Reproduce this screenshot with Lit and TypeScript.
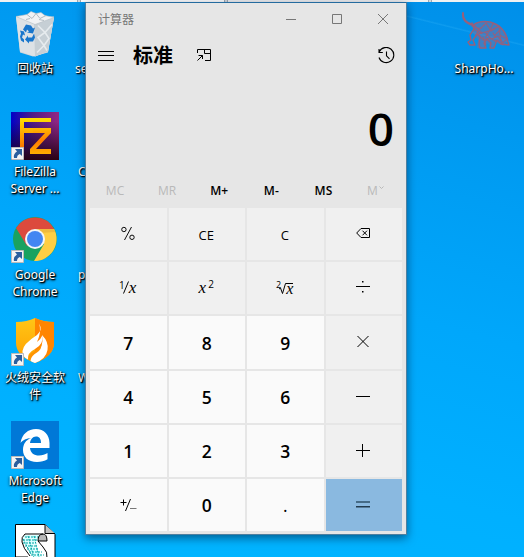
import { LitElement, html, css, svg, nothing } from "lit";
import { customElement, property } from "lit/decorators.js";

const recycle = svg`
  <path d="M0 5 38 5 32 41 17 45 4 41z" fill="#cfd6da"/>
  <path d="M0 5 18 11l20-5-6 34-13 5-15-5z" fill="#dde2e6"/>
  <path d="M18 11l20-5-6 34-13 5z" fill="#c6cfd5"/>
  <path d="M0 5 11 3l4-3 5 2 5-1 4 3 9 2-19 7z" fill="#f0f2f4" stroke="#b4bec4" stroke-width=".6"/>
  <path d="M11 3l5 4 4-5 4 5 6-3M14 7l-4 1M23 8l5 1" fill="none" stroke="#a9b4bb" stroke-width=".9"/>
  <path d="M22 14l7 7-7 5 6 8-7 7M36 13l-7 8 4 6-5 7 3 5" fill="none" stroke="#e6ebee" stroke-width="1.600"/>
  <g fill="#1876cc">
    <path d="M7 18l3-5 5 1 2 3 2-1-2 6-6-1 2-1-2-2-1 3z"/>
    <path d="M4 19l4 1 1 4-2-1-1 3 2 2v3l-3-2-1-4 1-3z"/>
    <path d="M12 26h4l2-4 1 4-2 4h-4v2l-4-4 3-4z"/>
  </g>`;

const filezilla = svg`
  <defs>
    <linearGradient id="fzb" x1="0" y1="0" x2="1" y2="0"><stop offset="0" stop-color="#0000c8"/><stop offset=".45" stop-color="#501d87"/><stop offset="1" stop-color="#942782"/></linearGradient>
    <linearGradient id="fzd" x1="0" y1="0" x2="0" y2="1"><stop offset=".2" stop-color="#150018" stop-opacity="0"/><stop offset="1" stop-color="#25000c" stop-opacity=".94"/></linearGradient>
    <linearGradient id="fzf" x1="0" y1="0" x2="0" y2="1"><stop offset="0" stop-color="#ffe000"/><stop offset=".55" stop-color="#ff9c00"/><stop offset="1" stop-color="#ef6200"/></linearGradient>
    <linearGradient id="fzz" x1="0" y1="0" x2="0" y2="1"><stop offset="0" stop-color="#ffb900"/><stop offset=".5" stop-color="#ff7b00"/><stop offset="1" stop-color="#ffaf00"/></linearGradient>
  </defs>
  <path d="M0 0h48v48H0z" fill="url(#fzb)"/><path d="M0 0h48v48H0z" fill="url(#fzd)"/>
  <path d="M9 6h31v4H13v6h11v5H13v19H9z" fill="url(#fzf)"/>
  <path d="M22 16h18v5L25 37h15v5H19v-5l15-16H22z" fill="url(#fzz)"/>`;

const chrome = svg`
  <circle cx="24" cy="22" r="22" fill="#1aa260"/>
  <path d="M24 22 5 11A22 22 0 0 1 43.200 12H24z" fill="#dc4a3d"/>
  <path d="M5 11l11 18 8-7-3-9z" fill="#dc4a3d"/>
  <path d="M24 12h19.200A22 22 0 0 1 23 44l10-17z" fill="#ffce44"/>
  <path d="M24 12h19.200l1 3-15 1z" fill="#d9a13a" opacity=".45"/>
  <circle cx="24" cy="22" r="10" fill="#f4f6f8"/><circle cx="24" cy="22" r="8" fill="#4386f2"/>`;

const huorong = svg`
  <defs><linearGradient id="hr" x1="0" y1="0" x2="0" y2="1"><stop offset="0" stop-color="#ffc617"/><stop offset="1" stop-color="#ffa000"/></linearGradient></defs>
  <path d="M24 0Q32 4 43 4v21q0 13-19 20Q5 38 5 25V4Q16 4 24 0z" fill="url(#hr)"/>
  <path d="M24 0Q32 4 43 4v21q0 13-19 20z" fill="#ff8500"/>
  <path d="M28 5.500Q32 12 26 17 12 26 11.500 33 11 39 17 41.500 16 35 24 31 33 26 31 18 30 21 26 24 31 13 28 5.500z" fill="#fff"/>
  <path d="M31 17Q38 24 36.500 32 35 41 24 45q-4-1-5-3 1-6 7-9 7-4 5-16z" fill="#fff"/>
  <path d="M17.200 41.500Q17 37 23 33.500 29 30.500 30.500 26 31 31 26 34.500 20 38 19.500 42.500z" fill="#ff9400"/>`;

const edge = svg`
  <path d="M0 0h48v48H0z" fill="#0078d7"/>
  <path d="M9.500 22C11 13 17 8 25 8c8 0 13.500 6 13.500 14v5H19c.5 5 4 7.500 9 7.500 3.500 0 6-1 8.500-2.500v6.200C33.500 40 30 41 26 41 17 41 12 36 12 29c0-6 3-10 8-12-6 .5-9 3-10.500 5zM19 22h11c0-4-1.500-6.500-5-6.500S19.500 18.500 19 22z" fill="#fff"/>`;

const script = svg`
  <path d="M4.500.5H34l10 10V48H4.500z" fill="#fff" stroke="#000"/>
  <path d="M34 .5v9h10" fill="#c0c0c0" stroke="#000"/>
  <path d="M13 11h20l-5 4q-8 4-1 12l4 5v16H11v-9h10q5-4-2-11-9-11-6-17z" fill="#dff"/>
  <path d="M14 13h15M12 16h15M12 19h12M14 22h11M16 25h12M18 28h13M20 31h13M17 12l6 22M23 12l5 21M12 15l8 15" stroke="#00a6a6" stroke-dasharray="2 1"/>
  <path d="M32 10q4 0 4 7h-9q0-7 5-7z" fill="#b8b8b8" stroke="#000"/>
  <path d="M32 10H14q-4 3-3 8 1 6 8 14M27 17l5 6q5 5 4 11M5 33h12" fill="none" stroke="#000"/>`;

const hound = svg`
  <path d="M11 13Q25 5 37 14q9 6 9 15l-5 5-8-4-2 6-6-5-4 5h-6l1-8-5-7z" fill="#7c6c9c" opacity=".5"/>
  <g fill="none" stroke="#96607c" stroke-linecap="round" stroke-linejoin="round">
    <path d="M1 1q-1 9 10 12" stroke-width="2"/>
    <path d="M11 13q7-5 17-3 15 4 18 20l1 3-8-1-4-4-3 8h-4l1-5-4-4-3 4 2 5h-6l-1-4 1-7-3-3-4 6 2 5H8l-2-3 3-2-1-5 4-6-2-6z" stroke-width="1.400"/>
    <path d="M10 14l8 3 6-6 5 8 8-5 1 9 7 4-5 4-4-7-7 3-6-7-7 2 5 6 7-2 7 4M17 16l-3 8M28 18l-5 8M31 21l3 5M12 17l8 5M12 13l8 8M24 20l12-5M31 12l-3 6M38 18l-5 5M21 25l3 8M38 24l2 7" stroke-width="1.200" stroke-dasharray="2 1.200"/>
  </g>`;

@customElement("desk-icon")
class DeskIcon extends LitElement {
  @property({ attribute: false }) art: unknown = nothing;
  @property() label = "";
  @property({ type: Boolean }) shortcut = false;

  static styles = css`
    :host { display: flex; flex-direction: column; align-items: center; width: 70px; height: 103px; }
    .art { position: relative; width: 48px; height: 48px; flex: none; }
    .art svg { display: block; overflow: visible; }
    .art .link { position: absolute; left: 0; bottom: 0; }
    .label {
      margin-top: 3px; white-space: pre; text-align: center; color: #fff;
      font: 12px/17px "Noto Sans", "Noto Sans CJK SC", sans-serif;
      text-shadow: 1px 1px 1px #000, 1px 1px 2px #000, 0 1px 3px rgba(0,0,0,.8);
    }
  `;

  render() {
    return html`
      <div class="art">
        <svg width="48" height="48" viewBox="0 0 48 48">${this.art}</svg>
        ${this.shortcut
          ? html`<svg class="link" width="13" height="13" viewBox="0 0 13 13">
              <path d="M.5.5h12v12H.5z" fill="#f4f4f4" stroke="#bbb" />
              <path d="M4 2h7v7L8.800 7Q6 8 6 11H3Q2 7 6 4.500z" fill="#2b5f9e" />
            </svg>`
          : nothing}
      </div>
      <div class="label">${this.label}</div>
    `;
  }
}

const line = (d: string, w = 20, h = 20) =>
  html`<svg width=${w} height=${h} viewBox="0 0 ${w} ${h}" fill="none" stroke="currentColor"><path d=${d} /></svg>`;

const keys: { c: string; v: unknown }[] = [
  { c: "fn", v: html`<svg width="14" height="16" viewBox="0 0 14 16" fill="none" stroke="currentColor" stroke-width=".95"><circle cx="2.900" cy="4.500" r="2.200"/><circle cx="11" cy="12.300" r="2.200"/><path d="M10.500 2 3.500 15"/></svg>` },
  { c: "fn", v: html`<span class="word">CE</span>` },
  { c: "fn", v: html`<span class="word">C</span>` },
  { c: "fn", v: html`<svg width="14" height="12" viewBox="0 0 14 12" fill="none" stroke="currentColor"><path d="M5 1.500h8.500v9H5L.7 6z"/><path d="M6.500 3.700l4.500 4.600M11 3.700L6.500 8.300"/></svg>` },
  { c: "fn", v: html`<span class="math"><span class="one">1</span><svg class="bar" width="6" height="13" viewBox="0 0 6 13"><path d="M5.500 .5.500 12.500" stroke="currentColor"/></svg><i>x</i></span>` },
  { c: "fn", v: html`<span class="math"><i>x</i><span class="sq">2</span></span>` },
  { c: "fn", v: html`<span class="math"><span class="deg">2</span><svg class="root" width="15" height="15" viewBox="0 0 15 15" fill="none" stroke="currentColor"><path d="M1 8l1.500-1L4.500 12.500 7.500 2.500H15"/></svg><i class="rad">x</i></span>` },
  { c: "fn", v: html`<svg width="14" height="14" viewBox="0 0 14 14"><path d="M0 6h14v1H0zM6 1h1.500v1.500H6zM6 11h1.500v1.500H6z" fill="currentColor"/></svg>` },
  ...["7", "8", "9"].map((v) => ({ c: "num first", v })),
  { c: "fn", v: html`<svg width="14" height="14" viewBox="0 0 14 14"><path d="M1.500 2l11 11M12.500 2l-11 11" stroke="currentColor"/></svg>` },
  ...["4", "5", "6"].map((v) => ({ c: "num", v })),
  { c: "fn", v: line("M0 7.5h14", 14, 14) },
  ...["1", "2", "3"].map((v) => ({ c: "num", v })),
  { c: "fn", v: line("M0 7.5h14M6.5 1v13", 14, 14) },
  { c: "num", v: html`<svg width="17" height="14" viewBox="0 0 17 14" fill="none" stroke="currentColor"><path d="M.5 4.500h6M3.500 1.500v6"/><path d="M10.500 1 5.500 13"/><path d="M10 10.500h6.500" stroke="#777"/></svg>` },
  { c: "num", v: "0" },
  { c: "num dot", v: "." },
  { c: "eq", v: html`<svg width="14" height="14" viewBox="0 0 14 14"><path d="M0 4h14v2H0z" fill="#456b87"/><path d="M0 9h14v1.500H0z" fill="#233b4e"/></svg>` },
];

@customElement("calc-window")
class CalcWindow extends LitElement {
  static styles = css`
    :host {
      display: flex; flex-direction: column; box-sizing: border-box; width: 322px; height: 533px;
      border: 1px solid #4f7f9f; border-top-color: #246b9f; background: #e6e6e6; color: #000;
      box-shadow: 0 3px 9px rgba(0,20,50,.55);
      font-family: "Open Sans", "Noto Sans CJK SC", sans-serif;
    }
    svg { display: block; flex: none; }
    .title { display: flex; height: 32px; align-items: center; color: #777; padding-left: 12px; font: 12px/16px "Noto Sans CJK SC", sans-serif; }
    .title .name { flex: 1; }
    .ctl { display: flex; justify-content: center; width: 46px; }
    .head { display: flex; align-items: center; height: 41px; padding: 0 11px 0 12px; }
    .mode { margin-left: 19px; font: 700 20px/28px "Noto Sans CJK SC", sans-serif; flex: 1; display: flex; align-items: center; gap: 24px; margin-top: -1px; }
    .result { flex: none; height: 100px; box-sizing: border-box; padding: 24px 12px 0 0; text-align: right; font-weight: 600; font-size: 46px; line-height: 56px; }
    .memory { display: grid; grid-template-columns: repeat(6, 52.100px); padding-left: 3px; height: 32px; line-height: 30px; text-align: center; font-size: 12px; font-weight: 600; }
    .off { color: #b9b9b9; font-weight: 400; }
    .drop { display: flex; justify-content: center; gap: 1px; }
    .drop svg { margin-top: 10px; }
    .keys { display: grid; grid-template: repeat(6, 1fr) / repeat(4, 1fr); gap: 2px; width: 312px; height: 323px; margin-left: 4px; }
    .key { display: flex; align-items: center; justify-content: center; background: #f0f0f0; padding: 0 1px 2px 0; box-sizing: border-box; min-width: 0; min-height: 0; }
    .num { background: #fafafa; font-size: 17.500px; font-weight: 600; line-height: 24px; padding: 0; }
    .first { padding-top: 2px; }
    .dot { font-weight: 400; }
    .eq { background: #8ab9e0; }
    .word { font-size: 13px; padding-top: 3px; }
    .math { display: flex; align-items: center; font: 17px/18px "Liberation Serif", serif; padding-top: 2px; }
    .one { font: 10px/12px "Open Sans", sans-serif; margin-bottom: 7px; }
    .bar { margin: 0 0 2px -2px; }
    .sq { font: 10px/12px "Open Sans", sans-serif; margin: 0 0 8px 2px; }
    .deg { font: 9px/10px "Open Sans", sans-serif; margin: 0 -3px 7px 0; }
    .rad { margin: 2px 0 0 -7px; font-size: 16px; }
  `;

  render() {
    return html`
      <div class="title">
        <span class="name">计算器</span>
        <span class="ctl">${line("M0 5.5h10", 10, 11)}</span>
        <span class="ctl">${line("M.5.5h9v9h-9z", 10, 10)}</span>
        <span class="ctl">${line("M0 0l10 10M10 0L0 10", 10, 10)}</span>
      </div>
      <div class="head">
        ${line("M0 4.5h16M0 8.5h16M0 13.5h16", 16, 18)}
        <div class="mode">标准
          <svg width="15" height="14" viewBox="0 0 15 14" fill="none" stroke="currentColor"><path d="M.5 5V1.500h13v11H8M7.500 1.500v4h6M.5 12.500l5-5M1.500 7.500h4V11"/></svg>
        </div>
        <svg width="17" height="17" viewBox="0 0 17 17" fill="none" stroke="currentColor" stroke-width="1.100"><path d="M1.300 4.800A7.600 7.600 0 1 1 1 10.500M1 2v3.500h3.800"/><path d="M8.500 4.500v4.300l3 3"/></svg>
      </div>
      <div class="result">0</div>
      <div class="memory">
        <span class="off">MC</span><span class="off">MR</span><span>M+</span><span>M-</span><span>MS</span>
        <span class="off drop">M<svg width="5" height="4" viewBox="0 0 5 4"><path d="M.5.5 2.500 2.500 4.500.5" fill="none" stroke="currentColor"/></svg></span>
      </div>
      <div class="keys">${keys.map((k) => html`<div class="key ${k.c}">${k.v}</div>`)}</div>
    `;
  }
}

@customElement("app-root")
class AppRoot extends LitElement {
  static styles = css`
    :host {
      display: block; position: relative; width: 524px; height: 557px; overflow: hidden;
      background:
        linear-gradient(14deg, transparent 0 79.700%, rgba(80,200,255,.18) 80.200%, transparent 80.900%) 406px 0 / 118px 200px no-repeat,
        linear-gradient(195deg, #008fe9 0%, #0099f0 20%, #00a7fb 50%, #00b0ff 75%, #00b6ff 100%);
    }
    .strip { display: grid; grid-template-columns: 2px 75px 4px 143px 4px 200px 4px 1fr; gap: 0; height: 2px; }
    .strip .a { background: #f0f1f2; }
    .strip .w { background: #fff; }
    .strip .g { background: #d5d9de; border: solid #9fa8b0; border-width: 0 1px; }
    .column { position: absolute; top: 9px; left: 0; display: flex; flex-direction: column; }
    .second { left: 75px; }
    .third { left: 449px; }
    calc-window { position: absolute; left: 85px; top: 2px; }
    .peek { height: 103px; box-sizing: border-box; padding-top: 51px; color: #fff; white-space: nowrap;
      font: 12px/17px "Noto Sans", sans-serif; text-shadow: 1px 1px 1px #000, 1px 1px 2px #000; }
    .in { padding-left: 3px; }
  `;

  render() {
    return html`
      <div class="strip">
        <i class="a"></i><i class="a"></i><i class="g"></i><i class="w"></i><i class="g"></i><i class="a"></i><i class="g"></i><i class="a"></i>
      </div>
      <div class="column">
        <desk-icon .art=${svg`<g transform="translate(5 2.500)">${recycle}</g>`} label="回收站"></desk-icon>
        <desk-icon .art=${filezilla} shortcut label=${"FileZilla\nServer ..."}></desk-icon>
        <desk-icon .art=${svg`<g transform="translate(0 2)">${chrome}</g>`} shortcut label=${"Google\nChrome"}></desk-icon>
        <desk-icon .art=${huorong} shortcut label=${"火绒安全软\n件"}></desk-icon>
        <desk-icon .art=${edge} shortcut label=${"Microsoft\nEdge"}></desk-icon>
        <desk-icon .art=${script}></desk-icon>
      </div>
      <div class="column second">
        <div class="peek">se</div><div class="peek in">C</div><div class="peek in">p</div><div class="peek in">W</div>
      </div>
      <div class="column third">
        <desk-icon .art=${svg`<g transform="translate(2 3)">${hound}</g>`} label="SharpHo..."></desk-icon>
      </div>
      <calc-window></calc-window>
    `;
  }
}
